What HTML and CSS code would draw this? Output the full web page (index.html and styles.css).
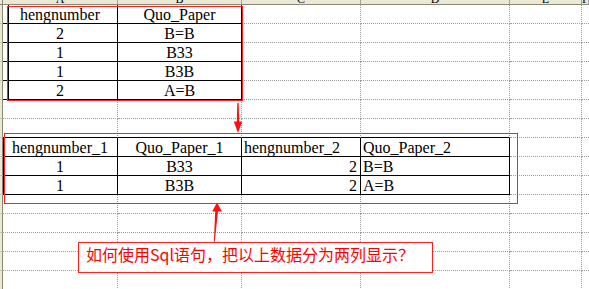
FILE: index.html
```html
<!DOCTYPE html>
<html lang="zh-CN">
<head>
<meta charset="utf-8">
<title>Sheet</title>
<link rel="stylesheet" href="styles.css">
</head>
<body>
<div class="page">
  <div class="sheet">
    <div class="hd corner"></div>
    <div class="hd"><span>A</span></div>
    <div class="hd"><span>B</span></div>
    <div class="hd"><span>C</span></div>
    <div class="hd"><span>D</span></div>
    <div class="hd"><span>E</span></div>
    <div class="hd last"><span>F</span></div>

    <div class="rh"></div>
    <div class="cell k kl1 c">hengnumber</div>
    <div class="cell k c">Quo_Paper</div>
    <div class="cell"></div><div class="cell"></div><div class="cell"></div><div class="cell last"></div>

    <div class="rh"></div>
    <div class="cell k kl1 c">2</div>
    <div class="cell k c">B=B</div>
    <div class="cell"></div><div class="cell"></div><div class="cell"></div><div class="cell last"></div>

    <div class="rh"></div>
    <div class="cell k kl1 c">1</div>
    <div class="cell k c">B33</div>
    <div class="cell"></div><div class="cell"></div><div class="cell"></div><div class="cell last"></div>

    <div class="rh"></div>
    <div class="cell k kl1 c">1</div>
    <div class="cell k c">B3B</div>
    <div class="cell"></div><div class="cell"></div><div class="cell"></div><div class="cell last"></div>

    <div class="rh"></div>
    <div class="cell k kl1 c">2</div>
    <div class="cell k c">A=B</div>
    <div class="cell"></div><div class="cell"></div><div class="cell"></div><div class="cell last"></div>

    <div class="rh"></div>
    <div class="cell"></div><div class="cell"></div><div class="cell"></div><div class="cell"></div><div class="cell"></div><div class="cell last"></div>

    <div class="rh"></div>
    <div class="cell kb"></div><div class="cell kb"></div><div class="cell kb"></div><div class="cell kb"></div><div class="cell"></div><div class="cell last"></div>

    <div class="rh"></div>
    <div class="cell k kl2 c">hengnumber_1</div>
    <div class="cell k c">Quo_Paper_1</div>
    <div class="cell k l">hengnumber_2</div>
    <div class="cell k l">Quo_Paper_2</div>
    <div class="cell"></div><div class="cell last"></div>

    <div class="rh"></div>
    <div class="cell k kl2 c">1</div>
    <div class="cell k c">B33</div>
    <div class="cell k r">2</div>
    <div class="cell k l">B=B</div>
    <div class="cell"></div><div class="cell last"></div>

    <div class="rh"></div>
    <div class="cell k kl2 c">1</div>
    <div class="cell k c">B3B</div>
    <div class="cell k r">2</div>
    <div class="cell k l">A=B</div>
    <div class="cell"></div><div class="cell last"></div>

    <div class="rh"></div>
    <div class="cell"></div><div class="cell"></div><div class="cell"></div><div class="cell"></div><div class="cell"></div><div class="cell last"></div>
    <div class="rh"></div>
    <div class="cell"></div><div class="cell"></div><div class="cell"></div><div class="cell"></div><div class="cell"></div><div class="cell last"></div>
    <div class="rh"></div>
    <div class="cell"></div><div class="cell"></div><div class="cell"></div><div class="cell"></div><div class="cell"></div><div class="cell last"></div>
    <div class="rh"></div>
    <div class="cell"></div><div class="cell"></div><div class="cell"></div><div class="cell"></div><div class="cell"></div><div class="cell last"></div>
    <div class="rh"></div>
    <div class="cell"></div><div class="cell"></div><div class="cell"></div><div class="cell"></div><div class="cell"></div><div class="cell last"></div>
  </div>

  <svg class="marks" width="589" height="289" viewBox="0 0 589 289" aria-hidden="true">
    <rect x="7.5" y="6.5" width="235" height="94" fill="none" stroke="#ff2020" stroke-width="1"/>
    <rect x="4.5" y="133.5" width="513" height="70" fill="none" stroke="#ff2020" stroke-width="1"/>
    <path d="M237.3 103 L238.7 103 L239.2 121.5 L242.2 121.5 L238 133 L233.8 121.5 L236.8 121.5 Z" fill="#ff1010"/>
    <path d="M217 202.5 L222 211.5 L218 211.5 L214.6 243 L213.8 243 L215.2 211.5 L212.2 211.5 Z" fill="#ff1010"/>
  </svg>

  <div class="note">如何使用Sql语句，把以上数据分为两列显示？</div>
</div>
</body>
</html>
```

FILE: styles.css
```css
html, body {
  margin: 0;
  padding: 0;
  background: #ffffff;
}

.page {
  position: relative;
  width: 589px;
  height: 289px;
  overflow: hidden;
}

.sheet {
  display: grid;
  grid-template-columns: 3px 115px 124px 119px 149px 72px 7px;
  grid-template-rows: 5px repeat(15, 19px);
  font-family: "Liberation Serif", "Times New Roman", serif;
  font-size: 16px;
  color: #000;
}

.hd {
  box-sizing: border-box;
  background: #ebe8d6;
  border-right: 1px solid #a6a48e;
  border-bottom: 1px solid #8a8872;
  overflow: hidden;
  text-align: center;
  font-family: "Liberation Serif", serif;
  font-size: 12px;
  line-height: 12px;
}

.hd span {
  display: block;
  margin-top: -7px;
}

.hd.corner {
  border-right-color: #8a8872;
}

.rh {
  box-sizing: border-box;
  background: #ebe8d6;
  border-right: 1px solid #8a8872;
  border-bottom: 1px solid #c9c6b0;
}

.cell {
  box-sizing: border-box;
  border-right: 1px dotted #9a9a9a;
  border-bottom: 1px dotted #9a9a9a;
  padding-top: 2px;
  line-height: 15px;
  white-space: nowrap;
  overflow: visible;
}

.cell.last {
  border-right: none;
}

.c { text-align: center; }
.l { padding-left: 2px; }
.r { text-align: right; padding-right: 3px; }

.k {
  border-right: 1px solid #000;
  border-bottom: 1px solid #000;
}

.kb {
  border-bottom: 1px solid #000;
}

.kl1 {
  background: linear-gradient(#000, #000) 5px 0 / 1px 100% no-repeat;
}

.kl2 {
  background: linear-gradient(#000, #000) 0 0 / 1px 100% no-repeat;
}

.marks {
  position: absolute;
  left: 0;
  top: 0;
  pointer-events: none;
}

.note {
  position: absolute;
  left: 78px;
  top: 242px;
  width: 355px;
  height: 31px;
  box-sizing: border-box;
  border: 1px solid #ff2020;
  background: #ffffff;
  padding: 2px 0 0 7px;
  font-family: "Noto Sans CJK SC", "Noto Sans", sans-serif;
  font-size: 16px;
  line-height: 18px;
  color: #ff0000;
  white-space: nowrap;
}
```
